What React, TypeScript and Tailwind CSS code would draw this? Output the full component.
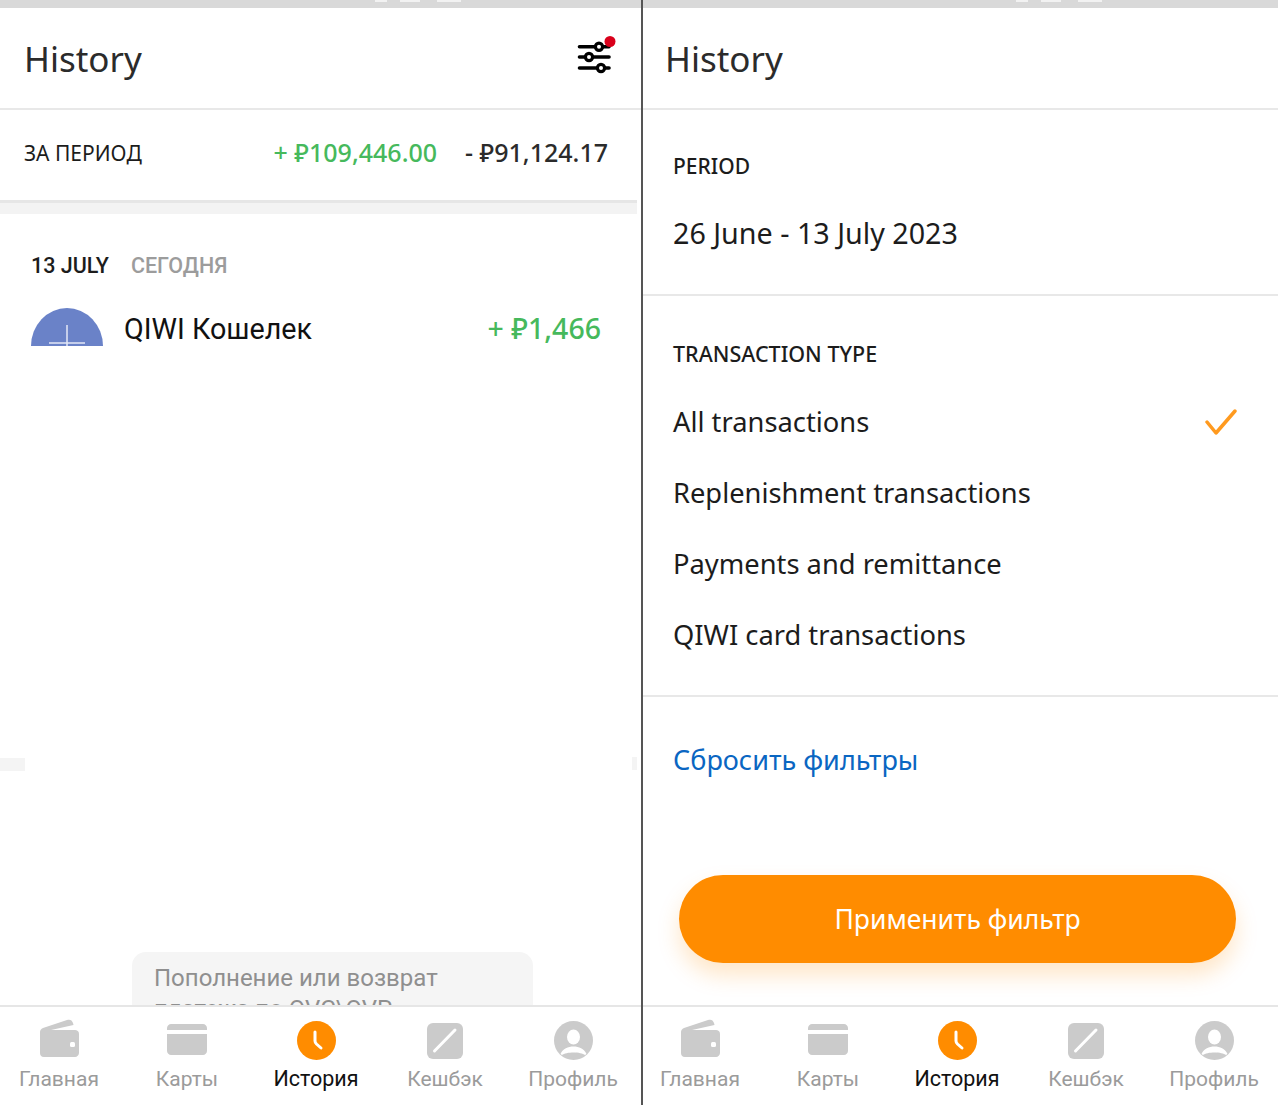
import React from 'react'

const noto = "font-['Noto_Sans',sans-serif]"
const roboto = "font-['Roboto',sans-serif]"

function WalletIcon() {
  return (
    <svg width="40" height="38" viewBox="0 0 40 38" className="mb-1">
      <path d="M1 13 C1 11 2 10 4 9 L28 1 C31 0 33 1 34 4 L34.5 6 L12 11 L36 11 C38 11 40 12 40 15 L40 34 C40 36 38 38 36 38 L5 38 C2 38 1 36 1 34 Z" fill="#cbcbcb" />
      <rect x="31" y="23" width="5" height="5" rx="1.5" fill="#fff" />
    </svg>
  )
}

function CardIcon() {
  return (
    <svg width="40" height="31" viewBox="0 0 40 31">
      <path d="M0 4 C0 2 2 0 4 0 L36 0 C38 0 40 2 40 4 L40 6 L0 6 Z" fill="#cbcbcb" />
      <path d="M0 10 L40 10 L40 27 C40 29 38 31 36 31 L4 31 C2 31 0 29 0 27 Z" fill="#cbcbcb" />
    </svg>
  )
}

function ClockIcon() {
  return (
    <svg width="39" height="39" viewBox="0 0 39 39" className="mt-[2px]">
      <circle cx="19.5" cy="19.5" r="19.5" fill="#ff8c00" />
      <path d="M18 11 L18 20 C18 21 18.5 22 19.5 23 L24 27" fill="none" stroke="#fff" strokeWidth="3" strokeLinecap="round" />
    </svg>
  )
}

function CashbackIcon() {
  return (
    <svg width="36" height="36" viewBox="0 0 36 36" className="mt-[2px]">
      <rect width="36" height="36" rx="6" fill="#cbcbcb" />
      <path d="M7.5 28 L28 7" stroke="#fff" strokeWidth="3" strokeLinecap="round" />
    </svg>
  )
}

function ProfileIcon() {
  return (
    <svg width="39" height="39" viewBox="0 0 39 39" className="mt-[2px]">
      <circle cx="19.5" cy="19.5" r="19.5" fill="#cbcbcb" />
      <ellipse cx="19.5" cy="16" rx="6.5" ry="7.5" fill="#fff" />
      <path d="M6.5 33 C9 27.5 14 25.5 19.5 25.5 C25 25.5 30 27.5 32.5 33 L31 34 C27 30.5 12 30.5 8 34 Z" fill="#fff" />
    </svg>
  )
}

function FilterIcon() {
  return (
    <svg width="40" height="44" viewBox="0 0 40 44">
      <g stroke="#000" strokeWidth="3.6" strokeLinecap="round" fill="none">
        <path d="M3.5 10.7 H33" />
        <path d="M3.5 21 H33" />
        <path d="M3.5 32 H33" />
      </g>
      <g stroke="#000" strokeWidth="3.2" fill="#fff">
        <circle cx="23" cy="10.7" r="3.6" />
        <circle cx="13" cy="21" r="3.6" />
        <circle cx="25" cy="32" r="3.6" />
      </g>
      <circle cx="34" cy="5.5" r="5.5" fill="#d9001b" />
    </svg>
  )
}

function StatusBar() {
  return (
    <div className="h-2 shrink-0 bg-[#d9d9d9] flex pl-[375px] overflow-hidden">
      <div className="w-[12px] h-[2px] bg-[#f2f2f2]" />
      <div className="w-[20px] h-[2px] bg-[#f2f2f2] ml-[13px]" />
      <div className="w-[24px] h-[2px] bg-[#f2f2f2] ml-[17px]" />
    </div>
  )
}

const navItems = [
  { label: 'Главная', icon: <WalletIcon />, width: 'w-[118px]' },
  { label: 'Карты', icon: <CardIcon />, width: 'w-[138px]' },
  { label: 'История', icon: <ClockIcon />, active: true, width: 'w-[120px]' },
  { label: 'Кешбэк', icon: <CashbackIcon />, width: 'w-[138px]' },
  { label: 'Профиль', icon: <ProfileIcon />, width: 'w-[118px]' },
]

function BottomNav() {
  return (
    <div className="h-[100px] shrink-0 border-t-2 border-[#e6e6e6] bg-white flex relative z-10">
      {navItems.map((item) => (
        <div key={item.label} className={`${item.width} flex flex-col items-center`}>
          <div className="h-[65px] flex items-center justify-center">{item.icon}</div>
          <span
            className={`${roboto} leading-[30px] mt-[-8px] ${
              item.active ? 'text-[21.5px] text-[#111]' : 'text-[21px] text-[#9b9b9b]'
            }`}
          >
            {item.label}
          </span>
        </div>
      ))}
    </div>
  )
}

function Header({ children }: { children?: React.ReactNode }) {
  return (
    <div className="h-[102px] shrink-0 border-b-2 border-[#e8e8e8] flex items-center justify-between pl-[24px] pr-[25px]">
      <h1 className={`${noto} text-[35px] leading-[44px] text-[#2b2b2b] mt-[2px]`}>History</h1>
      {children}
    </div>
  )
}

function HistoryPanel() {
  return (
    <div className="w-[641px] h-full shrink-0 flex flex-col bg-white">
      <StatusBar />
      <Header>
        <FilterIcon />
      </Header>
      <div className="h-[90px] shrink-0 flex items-center justify-between pl-[24px] pr-[33px]">
        <span className={`${noto} text-[21px] text-[#1c1c1c] mt-[-2px]`}>ЗА ПЕРИОД</span>
        <div className={`${noto} text-[25px] font-medium flex gap-[28px] mt-[-5px]`}>
          <span className="text-[#46b95c]">+ ₽109,446.00</span>
          <span className="text-[#2b2b2b]">- ₽91,124.17</span>
        </div>
      </div>
      <div className="h-[14px] w-[637px] shrink-0 bg-[#f3f3f3] border-t-[3px] border-[#e6e6e6]" />
      <div className="flex-1 relative overflow-hidden">
        <div className="flex items-center gap-[22px] pl-[31px] pt-[37px]">
          <span className={`${roboto} text-[21.5px] leading-[30px] font-medium text-[#1c1c1c]`}>13 JULY</span>
          <span className={`${roboto} text-[21.5px] leading-[30px] font-medium text-[#9c9c9c]`}>СЕГОДНЯ</span>
        </div>
        <div className="flex items-start justify-between pl-[31px] pr-[40px] mt-[27px]">
          <div className="flex items-start gap-[21px]">
            <svg width="72" height="38" viewBox="0 0 72 38">
              <path d="M0 38 A36 38 0 0 1 72 38 Z" fill="#6a82c8" />
              <path d="M36 17 V38 M18 35 H54" stroke="#e4e8f6" strokeWidth="1.5" />
            </svg>
            <span className={`${roboto} text-[28.7px] leading-[38px] text-[#111] mt-[2px]`}>QIWI Кошелек</span>
          </div>
          <span className={`${noto} text-[28.5px] leading-[38px] font-medium text-[#46b95c] mt-[1px]`}>+ ₽1,466</span>
        </div>
        <div className="absolute left-0 top-[544px] w-[25px] h-[13px] bg-[#f4f4f4]" />
        <div className="absolute left-[632px] top-[543px] w-[5px] h-[13px] bg-[#f4f4f4]" />
        <div className="absolute left-[132px] top-[738px] w-[401px] h-[80px] bg-[#f5f5f5] rounded-t-[14px] pl-[22px] pt-[11px]">
          <p className={`${roboto} text-[24px] leading-[31px] text-[#8f8f8f]`}>
            Пополнение или возврат
            <br />
            платежа по QVC\QVP
          </p>
        </div>
      </div>
      <BottomNav />
    </div>
  )
}

const txTypes = ['All transactions', 'Replenishment transactions', 'Payments and remittance', 'QIWI card transactions']

function FilterPanel() {
  return (
    <div className="w-[637px] h-full shrink-0 flex flex-col bg-white relative">
      <div className="absolute left-0 top-0 w-[1.5px] h-full bg-[#555] z-20" />
      <StatusBar />
      <Header />
      <div className="h-[186px] shrink-0 border-b-2 border-[#e8e8e8] pl-[32px] pt-[42px]">
        <div className={`${noto} text-[21px] leading-[28px] font-medium text-[#1c1c1c]`}>PERIOD</div>
        <div className={`${noto} text-[28.7px] leading-[40px] text-[#1c1c1c] mt-[33px]`}>26 June - 13 July 2023</div>
      </div>
      <div className="h-[401px] shrink-0 border-b-2 border-[#e8e8e8] pl-[32px] pr-[41px] pt-[44px]">
        <div className={`${noto} text-[21.5px] leading-[28px] font-medium text-[#1c1c1c]`}>TRANSACTION TYPE</div>
        <div className="mt-[18px] flex flex-col">
          {txTypes.map((t, i) => (
            <div key={t} className="h-[71px] flex items-center justify-between">
              <span className={`${noto} text-[27.3px] leading-[40px] text-[#1c1c1c]`}>{t}</span>
              {i === 0 && (
                <svg width="32" height="26" viewBox="0 0 32 26">
                  <path d="M2 13 L11 24 L30 2" fill="none" stroke="#ff9a1f" strokeWidth="3.5" strokeLinecap="round" strokeLinejoin="round" />
                </svg>
              )}
            </div>
          ))}
        </div>
      </div>
      <div className="flex-1 pl-[32px] pt-[43px] flex flex-col">
        <div className={`${noto} text-[27px] leading-[40px] text-[#0a66c2]`}>Сбросить фильтры</div>
        <div className="mt-[95px] ml-[6px] w-[557px] h-[88px] rounded-full bg-[#ff8c00] shadow-[0_12px_22px_rgba(255,140,0,0.22)] flex items-center justify-center pt-[2px]">
          <span className={`${noto} text-[26.5px] text-white`}>Применить фильтр</span>
        </div>
      </div>
      <BottomNav />
    </div>
  )
}

export default function App() {
  return (
    <div className="w-[1280px] h-[1105px] flex bg-white overflow-hidden">
      <HistoryPanel />
      <FilterPanel />
    </div>
  )
}
